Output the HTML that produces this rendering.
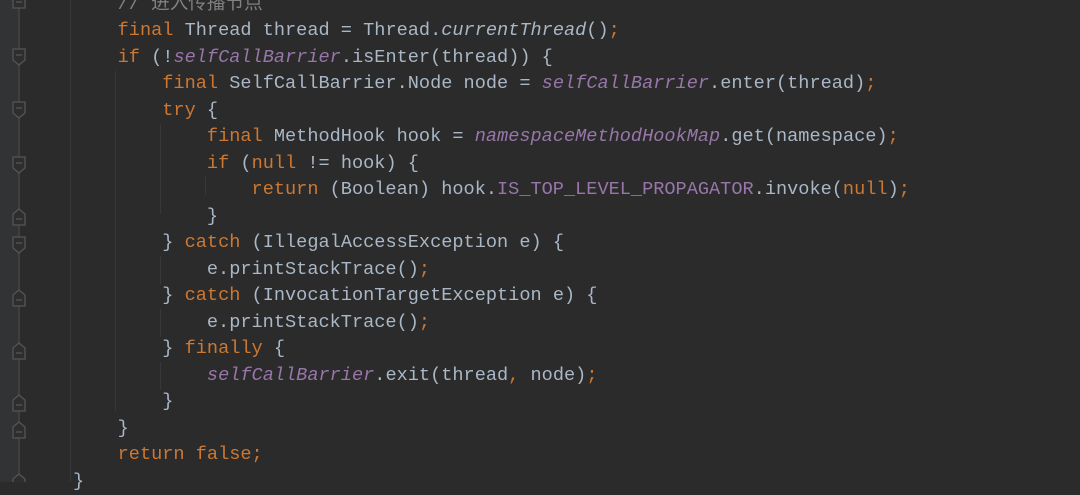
<!DOCTYPE html>
<html><head><meta charset="utf-8"><style>
html,body{margin:0;padding:0;width:1080px;height:482px;overflow:hidden;background:#2b2b2b}
#g{position:absolute;left:0;top:0;width:18px;height:482px;background:#313335}
pre{position:absolute;left:73px;top:-8.25px;margin:0;font-family:"Liberation Mono","Noto Sans CJK SC",monospace;font-size:18.6px;line-height:26.5px;color:#a9b7c6}
.k{color:#cc7832}.p{color:#9876aa}.i{font-style:italic}.c{color:#808080}
.v{position:absolute;width:1px;background:#383838}
</style></head><body>
<div id="g"></div>
<div class="v" style="left:70px;top:0;height:482px"></div>
<div class="v" style="left:115px;top:71px;height:340px"></div>
<div class="v" style="left:160px;top:124px;height:90px"></div>
<div class="v" style="left:205px;top:177px;height:18px"></div>
<div class="v" style="left:160px;top:256px;height:28px"></div>
<div class="v" style="left:160px;top:309px;height:28px"></div>
<div class="v" style="left:160px;top:362px;height:28px"></div>
<svg width="40" height="482" style="position:absolute;left:0;top:0">
<line x1="19" y1="0" x2="19" y2="482" stroke="#4a4a4a" stroke-width="1.3"/>
<g fill="#2e2e2e" stroke="#555" stroke-width="1.3">
<g id="d"><path d="M13,-8 H25 V3 L19,8 L13,3 Z"/><line x1="16" y1="-2" x2="22" y2="-2"/></g>
<use href="#d" y="57"/><use href="#d" y="110"/><use href="#d" y="165"/><use href="#d" y="245"/>
<g id="u"><path d="M13,8 H25 V-3 L19,-8 L13,-3 Z"/><line x1="16" y1="2" x2="22" y2="2"/></g>
<use href="#u" y="217"/><use href="#u" y="298"/><use href="#u" y="351"/><use href="#u" y="403"/><use href="#u" y="430"/><use href="#u" y="482"/>
</g></svg>
<pre>    <span class="c">// 进入传播节点</span>
    <span class="k">final</span> Thread thread = Thread.<span class="i">currentThread</span>()<span class="k">;</span>
    <span class="k">if</span> (!<span class="p i">selfCallBarrier</span>.isEnter(thread)) {
        <span class="k">final</span> SelfCallBarrier.Node node = <span class="p i">selfCallBarrier</span>.enter(thread)<span class="k">;</span>
        <span class="k">try</span> {
            <span class="k">final</span> MethodHook hook = <span class="p i">namespaceMethodHookMap</span>.get(namespace)<span class="k">;</span>
            <span class="k">if</span> (<span class="k">null</span> != hook) {
                <span class="k">return</span> (Boolean) hook.<span class="p">IS_TOP_LEVEL_PROPAGATOR</span>.invoke(<span class="k">null</span>)<span class="k">;</span>
            }
        } <span class="k">catch</span> (IllegalAccessException e) {
            e.printStackTrace()<span class="k">;</span>
        } <span class="k">catch</span> (InvocationTargetException e) {
            e.printStackTrace()<span class="k">;</span>
        } <span class="k">finally</span> {
            <span class="p i">selfCallBarrier</span>.exit(thread<span class="k">,</span> node)<span class="k">;</span>
        }
    }
    <span class="k">return false;</span>
}</pre>
</body></html>
